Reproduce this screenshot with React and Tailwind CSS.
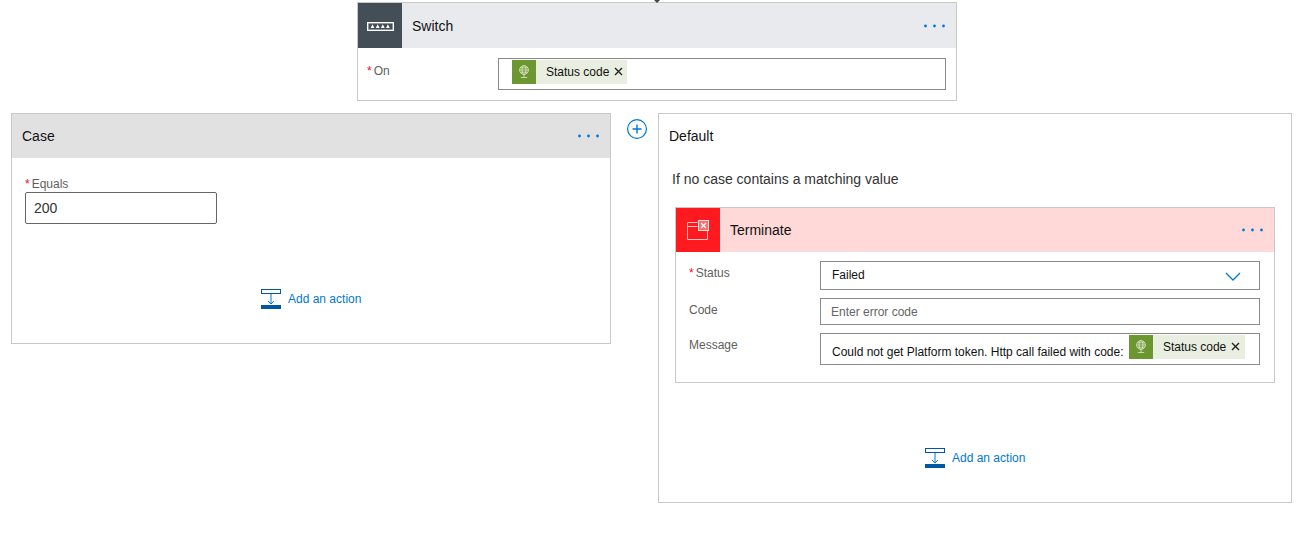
const font = { fontFamily: '"Liberation Sans", Arial, sans-serif' };

function Dots({ className = "" }) {
  return (
    <svg width="22" height="4" viewBox="0 0 22 4" className={className}>
      <circle cx="1.5" cy="2" r="1.4" fill="#0078d4" />
      <circle cx="10.5" cy="2" r="1.4" fill="#0078d4" />
      <circle cx="19.5" cy="2" r="1.4" fill="#0078d4" />
    </svg>
  );
}

function Req() {
  return <span className="text-[#e81123] mr-[2px]">*</span>;
}

function Token({ wide = false }) {
  return (
    <div className={`flex h-6 items-center bg-[#e8efe0] shrink-0 ${wide ? "pr-[1px]" : ""}`}>
      <div className="flex h-6 w-6 items-center justify-center bg-[#6c962f]">
        <svg width="14" height="16" viewBox="0 0 14 16" fill="none" stroke="#dfe9d2" strokeWidth="0.8">
          <circle cx="7" cy="6" r="4.4" />
          <ellipse cx="7" cy="6" rx="2" ry="4.4" />
          <path d="M2.6 6h8.8M3.3 3.8h7.4M3.3 8.2h7.4M7 10.4V13M3.8 13.5h6.4" />
        </svg>
      </div>
      <span className="ml-[10px] text-xs leading-6 text-[#111]">Status code</span>
      <svg width="9" height="9" viewBox="0 0 9 9" className="ml-[5px] mr-[4px] mb-[1px]" stroke="#222" strokeWidth="1.4">
        <path d="M1 1l7 7M8 1l-7 7" />
      </svg>
    </div>
  );
}

function AddAction({ className = "" }) {
  return (
    <div className={`flex items-center ${className}`}>
      <svg width="20" height="20" viewBox="0 0 20 20" fill="none">
        <rect x="0.5" y="0.5" width="19" height="4" stroke="#0058a3" />
        <path d="M10 5v10M7 12l3 3 3-3" stroke="#0078d4" />
        <rect x="0" y="16" width="20" height="4" fill="#0058a3" />
      </svg>
      <span className="ml-[7px] text-xs text-[#0078d4]">Add an action</span>
    </div>
  );
}

export default function App() {
  return (
    <div style={font} className="relative h-[544px] w-[1308px] overflow-hidden bg-white pt-[2px]">
      <svg width="6" height="3" viewBox="0 0 6 3" className="absolute left-[654px] top-0">
        <path d="M0 0h6L3 3z" fill="#444" />
      </svg>

      {/* Switch */}
      <div className="ml-[357px] h-[99px] w-[600px] border border-[#c8c8c8]">
        <div className="flex h-[45px] items-center bg-[#e9eaed]">
          <div className="flex h-[45px] w-[44px] items-center justify-center bg-[#434e57]">
            <svg width="27" height="9" viewBox="0 0 27 9" fill="none" className="mt-[2px]">
              <rect x="0.7" y="0.7" width="25.6" height="7.6" stroke="#fff" strokeWidth="1.4" />
              <path d="M5.5 2.2l1.9 3.8H3.6zM10.7 2.2l1.9 3.8H8.8zM15.8 2.2l1.9 3.8h-3.8zM20.9 2.2l1.9 3.8h-3.8z" fill="#fff" />
            </svg>
          </div>
          <span className="ml-[10px] text-sm text-[#111]">Switch</span>
          <Dots className="ml-auto mr-[10px]" />
        </div>
        <div className="flex pl-[9px] pt-[10px] pr-[10px]">
          <div className="w-[131px] pt-[6px] text-xs leading-[15px] text-[#605e5c]">
            <Req />On
          </div>
          <div className="flex h-8 flex-1 items-center border border-[#8a8a8a] pl-[13px]">
            <div className="mb-[4px]"><Token /></div>
          </div>
        </div>
      </div>

      <div className="mt-[12px] ml-[11px] flex items-start">
        {/* Case */}
        <div className="h-[231px] w-[600px] border border-[#c8c8c8]">
          <div className="flex h-[44px] items-center bg-[#e1e1e1]">
            <span className="ml-[10px] text-sm text-[#111]">Case</span>
            <Dots className="ml-auto mr-[10px]" />
          </div>
          <div className="px-[13px] pt-[19px]">
            <div className="text-xs leading-[15px] text-[#605e5c]">
              <Req />Equals
            </div>
            <div className="flex h-8 w-[192px] items-center rounded-[2px] border border-[#666] pl-[8px] text-sm text-[#333]">
              200
            </div>
          </div>
          <AddAction className="ml-[249px] mt-[65px]" />
        </div>

        {/* Add branch */}
        <svg width="20" height="20" viewBox="0 0 20 20" fill="none" className="ml-[16px] mt-[6px] shrink-0" stroke="#0078d4">
          <circle cx="10" cy="10" r="9.4" strokeWidth="1.2" />
          <path d="M10 5.5v9M5.5 10h9" strokeWidth="1.4" />
        </svg>

        {/* Default */}
        <div className="ml-[11px] h-[390px] w-[634px] border border-[#c8c8c8] pl-[10px]">
          <div className="pt-[14px] text-sm leading-4 text-[#111]">Default</div>
          <div className="ml-[3px] mt-[27px] text-sm leading-4 text-[#333]">If no case contains a matching value</div>
          <div className="ml-[6px] mt-[20px] h-[176px] w-[600px] border border-[#c8c8c8]">
            <div className="flex h-[44px] items-center bg-[#ffd9d7]">
              <div className="flex h-[44px] w-[44px] items-center justify-center bg-[#ff1a1f]">
                <svg width="22" height="22" viewBox="0 0 22 22" fill="none" stroke="#ffc4c4">
                  <path d="M10.5 3.5H0.5V20.5H20.5V12M0.5 7.5h10" />
                  <rect x="11.5" y="1.5" width="10" height="10" fill="#ff6a6a" stroke="#ffe4e4" />
                  <path d="M14 4l5 5M19 4l-5 5" stroke="#fff" strokeWidth="1.3" />
                </svg>
              </div>
              <span className="ml-[10px] text-sm text-[#111]">Terminate</span>
              <Dots className="ml-auto mr-[10px]" />
            </div>
            <div className="flex flex-col pl-[13px] pr-[14px] pt-[9px]">
              <div className="flex">
                <div className="w-[131px] pt-[5px] text-xs leading-[15px] text-[#605e5c]"><Req />Status</div>
                <div className="flex h-[29px] flex-1 items-center justify-between border border-[#8a8a8a] pl-[11px] pr-[18px] text-xs text-[#111]">
                  <span className="mb-[1px]">Failed</span>
                  <svg width="16" height="9" viewBox="0 0 16 9" fill="none" stroke="#0078d4" strokeWidth="1.3" className="mt-[2px]">
                    <path d="M1 1l7 7 7-7" />
                  </svg>
                </div>
              </div>
              <div className="mt-[8px] flex">
                <div className="w-[131px] pt-[5px] text-xs leading-[15px] text-[#605e5c]">Code</div>
                <div className="flex h-[27px] flex-1 items-center border border-[#8a8a8a] pl-[10px] text-xs text-[#666]">
                  Enter error code
                </div>
              </div>
              <div className="mt-[8px] flex">
                <div className="w-[131px] pt-[5px] text-xs leading-[15px] text-[#605e5c]">Message</div>
                <div className="flex h-[32px] flex-1 items-center border border-[#8a8a8a] pl-[11px]">
                  <span className="mt-[6px] text-xs text-[#111]">Could not get Platform token. Http call failed with code:</span>
                  <div className="ml-[5.4px] mb-[4px]"><Token wide /></div>
                </div>
              </div>
            </div>
          </div>
          <AddAction className="ml-[256px] mt-[65px]" />
        </div>
      </div>
    </div>
  );
}
